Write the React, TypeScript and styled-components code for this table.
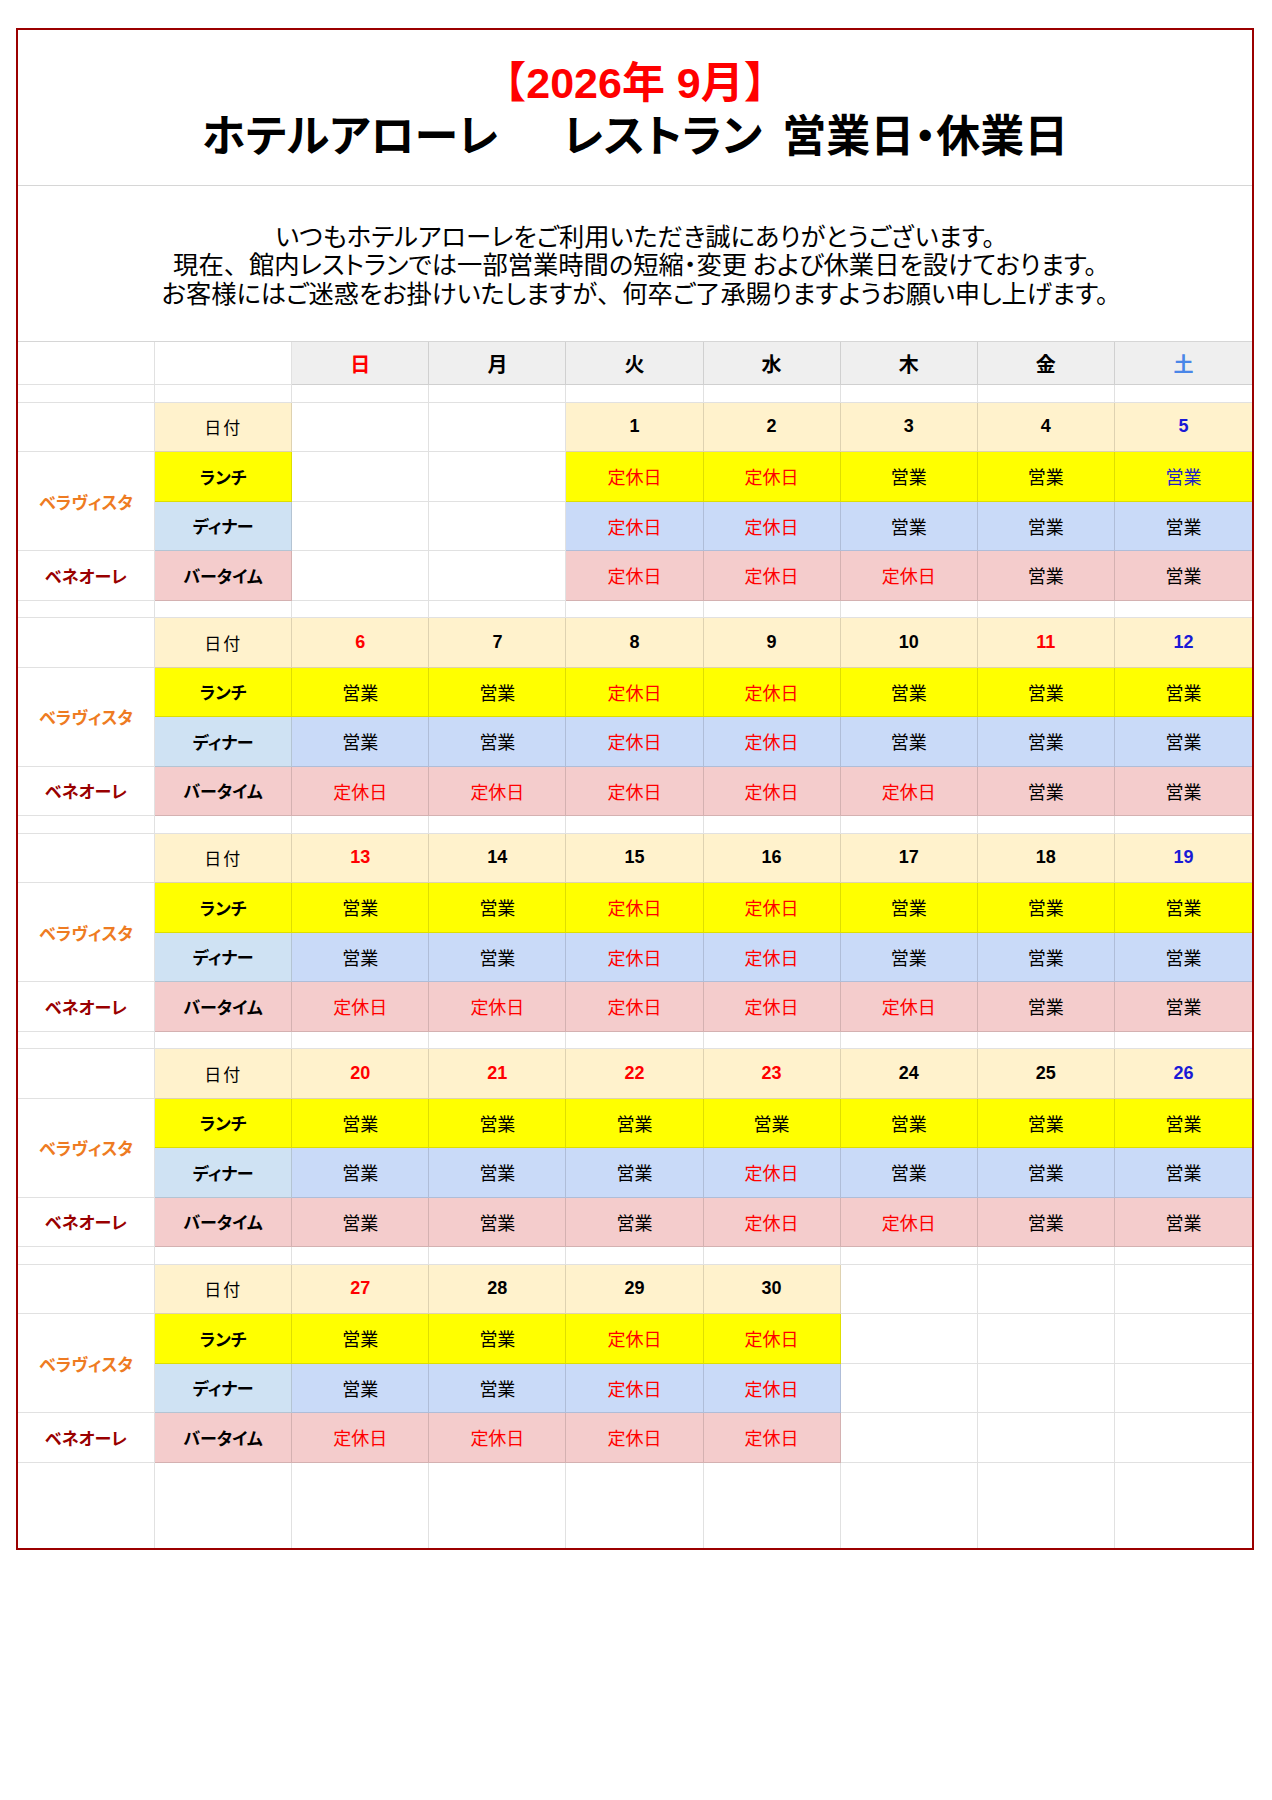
import React from "react";
import styled, { createGlobalStyle } from "styled-components";

type Status = "o" | "x" | "b";
type Tone = "plain" | "sun" | "sat";
type Day = {
  date: number;
  tone: Tone;
  lunch: Status;
  dinner: Status;
  bar: Status;
} | null;

const FILL = {
  header: "#efefef",
  date: "#fff2cc",
  lunch: "#ffff00",
  dinnerLabel: "#cfe2f3",
  dinner: "#c9daf8",
  bar: "#f4cccc",
};

const d = (date: number, tone: Tone, s: string): Day => ({
  date,
  tone,
  lunch: s[0] as Status,
  dinner: s[1] as Status,
  bar: s[2] as Status,
});

const weeks: Day[][] = [
  [null, null, d(1, "plain", "xxx"), d(2, "plain", "xxx"), d(3, "plain", "oox"), d(4, "plain", "ooo"), d(5, "sat", "boo")],
  [d(6, "sun", "oox"), d(7, "plain", "oox"), d(8, "plain", "xxx"), d(9, "plain", "xxx"), d(10, "plain", "oox"), d(11, "sun", "ooo"), d(12, "sat", "ooo")],
  [d(13, "sun", "oox"), d(14, "plain", "oox"), d(15, "plain", "xxx"), d(16, "plain", "xxx"), d(17, "plain", "oox"), d(18, "plain", "ooo"), d(19, "sat", "ooo")],
  [d(20, "sun", "ooo"), d(21, "sun", "ooo"), d(22, "sun", "ooo"), d(23, "sun", "oxx"), d(24, "plain", "oox"), d(25, "plain", "ooo"), d(26, "sat", "ooo")],
  [d(27, "sun", "oox"), d(28, "plain", "oox"), d(29, "plain", "xxx"), d(30, "plain", "xxx"), null, null, null],
];

const weekdays = [
  { label: "日", tone: "sun" },
  { label: "月", tone: "plain" },
  { label: "火", tone: "plain" },
  { label: "水", tone: "plain" },
  { label: "木", tone: "plain" },
  { label: "金", tone: "plain" },
  { label: "土", tone: "satLight" },
];

const toneColor: Record<string, string> = {
  plain: "#000000",
  sun: "#ff0000",
  sat: "#1a1ad6",
  satLight: "#4a86e8",
};

const GlobalStyle = createGlobalStyle`
  html, body {
    margin: 0;
    padding: 0;
    background: #ffffff;
  }
  body {
    font-family: "Liberation Sans", "Noto Sans CJK JP", sans-serif;
    color: #000000;
  }
`;

const Sheet = styled.div`
  box-sizing: border-box;
  width: 1238px;
  height: 1522px;
  margin: 28px 0 0 16px;
  border: 2px solid #9b0000;
  display: flex;
  flex-direction: column;
`;

const TitleBlock = styled.header`
  box-sizing: border-box;
  height: 156px;
  padding-top: 28px;
  border-bottom: 1px solid #d6d6d6;
  text-align: center;
`;

const MonthTitle = styled.h1`
  margin: 0;
  font: 700 43px/50px "Liberation Sans", "Noto Sans CJK JP", sans-serif;
  color: #ff0000;
`;

const HotelTitle = styled.h2`
  margin: 0;
  font: 700 44px/50px "Noto Sans CJK JP", sans-serif;
  font-feature-settings: "palt";
  white-space: pre;
  color: #000000;
`;

const Intro = styled.section`
  box-sizing: border-box;
  height: 156px;
  border-bottom: 1px solid #d6d6d6;
  display: flex;
  flex-direction: column;
  align-items: center;
  justify-content: center;
  font: 400 25.3px/28.5px "Noto Sans CJK JP", sans-serif;
  font-feature-settings: "palt";
  white-space: pre;
`;

/* full-width punctuation keeps its em box, as in the printed notice */
const Punct = styled.span`
  font-feature-settings: normal;
`;

const Row = styled.div<{ $h: number }>`
  display: grid;
  grid-template-columns: repeat(9, 1fr);
  height: ${(p) => p.$h}px;
`;

const WeekGrid = styled.div`
  display: grid;
  grid-template-columns: repeat(9, 1fr);
  grid-template-rows: repeat(4, 49.5px);
`;

const BottomRow = styled.div`
  flex: 1;
  display: grid;
  grid-template-columns: repeat(9, 1fr);
`;

const Cell = styled.div<{ $fill?: string; $edge?: boolean; $open?: boolean; $span?: number }>`
  box-sizing: border-box;
  min-width: 0;
  display: flex;
  align-items: center;
  justify-content: center;
  background: ${(p) => p.$fill ?? "#ffffff"};
  border-right: ${(p) =>
    p.$edge ? "none" : `1px solid ${p.$fill ? "rgba(0, 0, 0, 0.13)" : "#e1e1e1"}`};
  border-bottom: ${(p) =>
    p.$open ? "none" : `1px solid ${p.$fill ? "rgba(0, 0, 0, 0.13)" : "#e1e1e1"}`};
  grid-row: ${(p) => (p.$span ? `span ${p.$span}` : "auto")};
`;

const DayName = styled.span<{ $color: string }>`
  font: 700 20px "Noto Sans CJK JP", sans-serif;
  color: ${(p) => p.$color};
`;

const Venue = styled.span<{ $color: string }>`
  font: 700 17px "Noto Sans CJK JP", sans-serif;
  font-feature-settings: "palt";
  color: ${(p) => p.$color};
`;

const Meal = styled.span<{ $bold?: boolean }>`
  font: ${(p) => (p.$bold ? 700 : 400)} 17px "Noto Sans CJK JP", sans-serif;
  font-feature-settings: ${(p) => (p.$bold ? '"palt"' : "normal")};
  letter-spacing: ${(p) => (p.$bold ? "0" : "2px")};
`;

const DateNum = styled.span<{ $color: string }>`
  font: 700 18px "Liberation Sans", sans-serif;
  color: ${(p) => p.$color};
`;

const StatusText = styled.span<{ $color: string }>`
  font: 400 18px "Noto Sans CJK JP", sans-serif;
  color: ${(p) => p.$color};
`;

const statusLabel = (s: Status) => (s === "x" ? "定休日" : "営業");
const statusColor = (s: Status) =>
  s === "x" ? "#ff0000" : s === "b" ? "#2020c8" : "#000000";

const Spacer: React.FC = () => (
  <Row $h={17.5}>
    {Array.from({ length: 9 }).map((_, i) => (
      <Cell key={i} $edge={i === 8} />
    ))}
  </Row>
);

const meals: { key: "lunch" | "dinner" | "bar"; fill: string }[] = [
  { key: "lunch", fill: FILL.lunch },
  { key: "dinner", fill: FILL.dinner },
  { key: "bar", fill: FILL.bar },
];

const DayCells: React.FC<{ days: Day[]; meal: number }> = ({ days, meal }) => (
  <>
    {days.map((day, i) => {
      if (!day) return <Cell key={i} $edge={i === 6} />;
      const s = day[meals[meal].key];
      return (
        <Cell key={i} $fill={meals[meal].fill} $edge={i === 6}>
          <StatusText $color={statusColor(s)}>{statusLabel(s)}</StatusText>
        </Cell>
      );
    })}
  </>
);

const Week: React.FC<{ days: Day[] }> = ({ days }) => (
  <WeekGrid>
    {/* date row */}
    <Cell />
    <Cell $fill={FILL.date}>
      <Meal>日付</Meal>
    </Cell>
    {days.map((day, i) =>
      day ? (
        <Cell key={i} $fill={FILL.date} $edge={i === 6}>
          <DateNum $color={toneColor[day.tone]}>{day.date}</DateNum>
        </Cell>
      ) : (
        <Cell key={i} $edge={i === 6} />
      )
    )}

    {/* lunch row, venue cell spans lunch + dinner */}
    <Cell $span={2}>
      <Venue $color="#ee7b22">ベラヴィスタ</Venue>
    </Cell>
    <Cell $fill={FILL.lunch}>
      <Meal $bold>ランチ</Meal>
    </Cell>
    <DayCells days={days} meal={0} />

    {/* dinner row */}
    <Cell $fill={FILL.dinnerLabel}>
      <Meal $bold>ディナー</Meal>
    </Cell>
    <DayCells days={days} meal={1} />

    {/* bar row */}
    <Cell>
      <Venue $color="#990000">ベネオーレ</Venue>
    </Cell>
    <Cell $fill={FILL.bar}>
      <Meal $bold>バータイム</Meal>
    </Cell>
    <DayCells days={days} meal={2} />
  </WeekGrid>
);

export default function App() {
  return (
    <>
      <GlobalStyle />
      <Sheet>
        <TitleBlock>
          <MonthTitle>【2026年 9月】</MonthTitle>
          <HotelTitle>{"ホテルアローレ　  レストラン  営業日・休業日"}</HotelTitle>
        </TitleBlock>

        <Intro>
          <div>いつもホテルアローレをご利用いただき誠にありがとうございます。</div>
          <div>
            現在<Punct>、</Punct>館内レストランでは一部営業時間の短縮・変更 および休業日を設けております。
          </div>
          <div>
            お客様にはご迷惑をお掛けいたしますが<Punct>、</Punct>何卒ご了承賜りますようお願い申し上げます。
          </div>
        </Intro>

        <Row $h={43}>
          <Cell />
          <Cell />
          {weekdays.map((w, i) => (
            <Cell key={w.label} $fill={FILL.header} $edge={i === 6}>
              <DayName $color={toneColor[w.tone]}>{w.label}</DayName>
            </Cell>
          ))}
        </Row>
        <Spacer />

        {weeks.map((days, i) => (
          <React.Fragment key={i}>
            <Week days={days} />
            {i < weeks.length - 1 && <Spacer />}
          </React.Fragment>
        ))}

        <BottomRow>
          {Array.from({ length: 9 }).map((_, i) => (
            <Cell key={i} $edge={i === 8} $open />
          ))}
        </BottomRow>
      </Sheet>
    </>
  );
}
